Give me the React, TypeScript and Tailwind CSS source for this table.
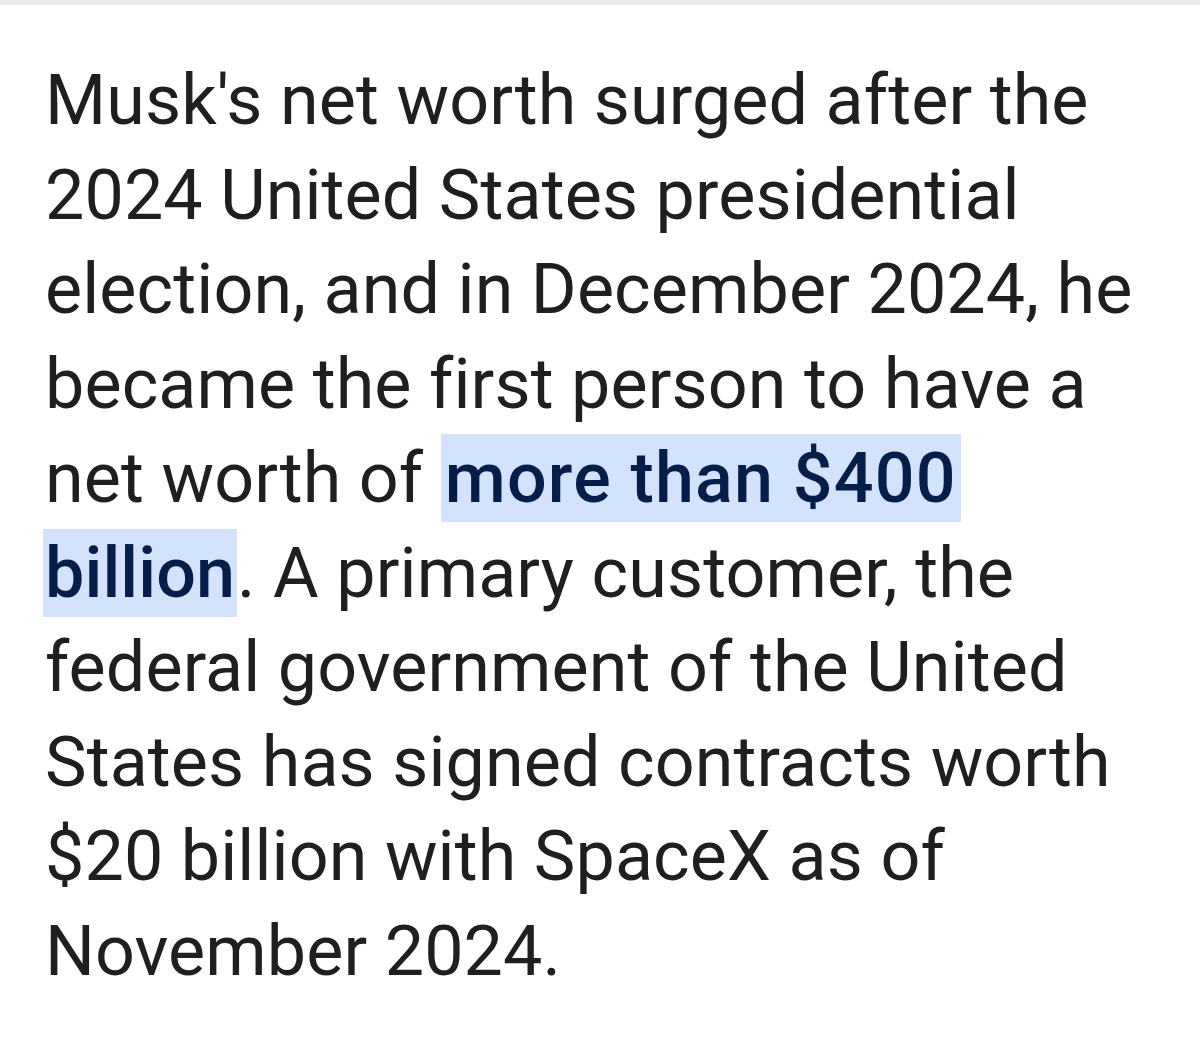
export default function App() {
  return (
    <div className="min-h-[1049px] w-[1200px] bg-white">
      <div className="h-[5px] w-full bg-[#e8eaed]" />
      <p
        className="pl-[45px] pt-[48px] text-[70px] leading-[94.5px] text-[#1f1f1f] tracking-[0.1px]"
        style={{ fontFamily: "Roboto, 'Noto Sans', sans-serif" }}
      >
        Musk's net worth surged after the
        <br />
        2024 United States presidential
        <br />
        election, and in December 2024, he
        <br />
        became the first person to have a
        <br />
        net worth of{" "}
        <span className="bg-[#d3e3fd] px-[4px] py-[3px] font-medium tracking-[1.2px] text-[#041e49]">more than $400</span>
        <br />
        <span className="-ml-[2px] bg-[#d3e3fd] px-[2px] py-[3px] font-medium text-[#041e49]">billion</span>. A primary customer, the
        <br />
        federal government of the United
        <br />
        States has signed contracts worth
        <br />
        $20 billion with SpaceX as of
        <br />
        November 2024.
      </p>
    </div>
  );
}
